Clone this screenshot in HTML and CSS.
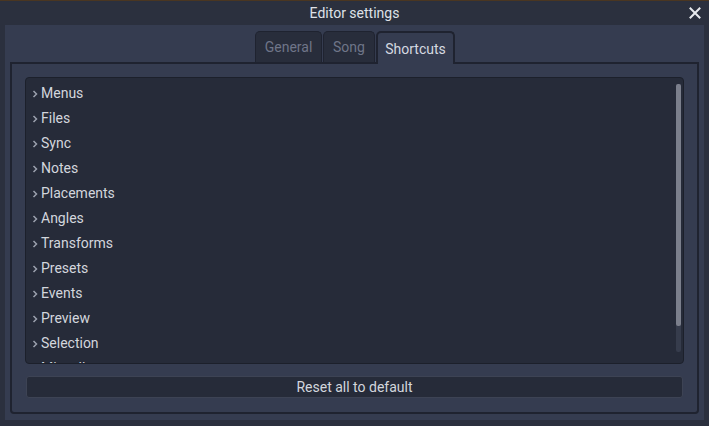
FILE: index.html
```html
<!DOCTYPE html>
<html>
<head>
<meta charset="utf-8">
<link rel="stylesheet" href="styles.css">
</head>
<body>
<div class="strip"></div>
<div class="titlebar">
  <span class="title">Editor settings</span>
  <svg class="close" width="12" height="12" viewBox="0 0 12 12"><path d="M1.5 1.5 L10.5 10.5 M10.5 1.5 L1.5 10.5" stroke="#e8eaee" stroke-width="2" stroke-linecap="square"/></svg>
</div>
<div class="window">
  <div class="tabs">
    <div class="tab t-general">General</div>
    <div class="tab t-song">Song</div>
    <div class="tab active t-short">Shortcuts</div>
  </div>
  <div class="panel">
    <div class="tree">
      <div class="list">
        <div class="row"><svg class="chev" width="6" height="8" viewBox="0 0 6 8"><path d="M1.5 1 L4.5 4 L1.5 7" fill="none" stroke="#9ba0ad" stroke-width="1.5"/></svg><span>Menus</span></div>
        <div class="row"><svg class="chev" width="6" height="8" viewBox="0 0 6 8"><path d="M1.5 1 L4.5 4 L1.5 7" fill="none" stroke="#9ba0ad" stroke-width="1.5"/></svg><span>Files</span></div>
        <div class="row"><svg class="chev" width="6" height="8" viewBox="0 0 6 8"><path d="M1.5 1 L4.5 4 L1.5 7" fill="none" stroke="#9ba0ad" stroke-width="1.5"/></svg><span>Sync</span></div>
        <div class="row"><svg class="chev" width="6" height="8" viewBox="0 0 6 8"><path d="M1.5 1 L4.5 4 L1.5 7" fill="none" stroke="#9ba0ad" stroke-width="1.5"/></svg><span>Notes</span></div>
        <div class="row"><svg class="chev" width="6" height="8" viewBox="0 0 6 8"><path d="M1.5 1 L4.5 4 L1.5 7" fill="none" stroke="#9ba0ad" stroke-width="1.5"/></svg><span>Placements</span></div>
        <div class="row"><svg class="chev" width="6" height="8" viewBox="0 0 6 8"><path d="M1.5 1 L4.5 4 L1.5 7" fill="none" stroke="#9ba0ad" stroke-width="1.5"/></svg><span>Angles</span></div>
        <div class="row"><svg class="chev" width="6" height="8" viewBox="0 0 6 8"><path d="M1.5 1 L4.5 4 L1.5 7" fill="none" stroke="#9ba0ad" stroke-width="1.5"/></svg><span>Transforms</span></div>
        <div class="row"><svg class="chev" width="6" height="8" viewBox="0 0 6 8"><path d="M1.5 1 L4.5 4 L1.5 7" fill="none" stroke="#9ba0ad" stroke-width="1.5"/></svg><span>Presets</span></div>
        <div class="row"><svg class="chev" width="6" height="8" viewBox="0 0 6 8"><path d="M1.5 1 L4.5 4 L1.5 7" fill="none" stroke="#9ba0ad" stroke-width="1.5"/></svg><span>Events</span></div>
        <div class="row"><svg class="chev" width="6" height="8" viewBox="0 0 6 8"><path d="M1.5 1 L4.5 4 L1.5 7" fill="none" stroke="#9ba0ad" stroke-width="1.5"/></svg><span>Preview</span></div>
        <div class="row"><svg class="chev" width="6" height="8" viewBox="0 0 6 8"><path d="M1.5 1 L4.5 4 L1.5 7" fill="none" stroke="#9ba0ad" stroke-width="1.5"/></svg><span>Selection</span></div>
        <div class="row"><svg class="chev" width="6" height="8" viewBox="0 0 6 8"><path d="M1.5 1 L4.5 4 L1.5 7" fill="none" stroke="#9ba0ad" stroke-width="1.5"/></svg><span>Miscellaneous</span></div>
      </div>
      <div class="scrollbar"><div class="grabber"></div></div>
    </div>
    <div class="button">Reset all to default</div>
  </div>
</div>
</body>
</html>
```

FILE: styles.css
```css
html, body {
  margin: 0;
  padding: 0;
}
body {
  width: 709px;
  height: 426px;
  overflow: hidden;
  background: #2b303e;
  font-family: Roboto, "Liberation Sans", sans-serif;
  font-size: 14px;
  color: #d3d6dd;
}
.strip {
  height: 1px;
  background: #4a3621;
}
.titlebar {
  height: 24px;
  display: flex;
  align-items: center;
  justify-content: center;
  position: relative;
}
.title {
  color: #dfe2e8;
  line-height: 24px;
}
.close {
  position: absolute;
  right: 8px;
  top: 6px;
}
.window {
  margin: 0 5px;
  height: 395px;
  background: #353c50;
  display: flex;
  flex-direction: column;
}
.tabs {
  display: flex;
  justify-content: center;
  padding-top: 6px;
  padding-left: 1px;
  height: 31px;
  gap: 1px;
  position: relative;
  z-index: 1;
}
.tab {
  height: 31px;
  box-sizing: border-box;
  border: 1px solid #1f2330;
  border-bottom: none;
  border-radius: 5px 5px 0 0;
  background: #282d3b;
  color: #6f7588;
  display: flex;
  align-items: center;
  justify-content: center;
}
.t-general { width: 67px; }
.t-song { width: 52px; }
.t-short { width: 79px; }
.tab.active {
  background: #353c50;
  color: #d6d9e0;
  border-width: 2px;
  height: 33px;
  margin-bottom: -2px;
}
.panel {
  margin: 0 5px;
  height: 352px;
  box-sizing: border-box;
  border: 2px solid #1f2330;
  border-radius: 0 0 4px 4px;
  padding: 13px;
  display: flex;
  flex-direction: column;
  gap: 12px;
}
.tree {
  height: 287px;
  box-sizing: border-box;
  background: #262b39;
  border: 1px solid #1c202b;
  border-radius: 4px;
  display: flex;
  overflow: hidden;
}
.list {
  flex: 1;
  padding-top: 3px;
  overflow: hidden;
}
.row {
  height: 25px;
  line-height: 25px;
  display: flex;
  align-items: center;
  padding-left: 6px;
  white-space: nowrap;
}
.chev {
  margin-right: 3px;
  flex: none;
}
.scrollbar {
  width: 5px;
  margin: 6px 2px 11px 0;
  background: #363c4c;
  border-radius: 2px;
}
.grabber {
  height: 242px;
  background: #7b7f8c;
  border-radius: 2px;
}
.button {
  height: 22px;
  box-sizing: border-box;
  margin: 0 1px;
  background: #262b39;
  border: 1px solid #3d4354;
  border-radius: 3px;
  display: flex;
  align-items: center;
  justify-content: center;
  color: #d3d6dd;
}
```
